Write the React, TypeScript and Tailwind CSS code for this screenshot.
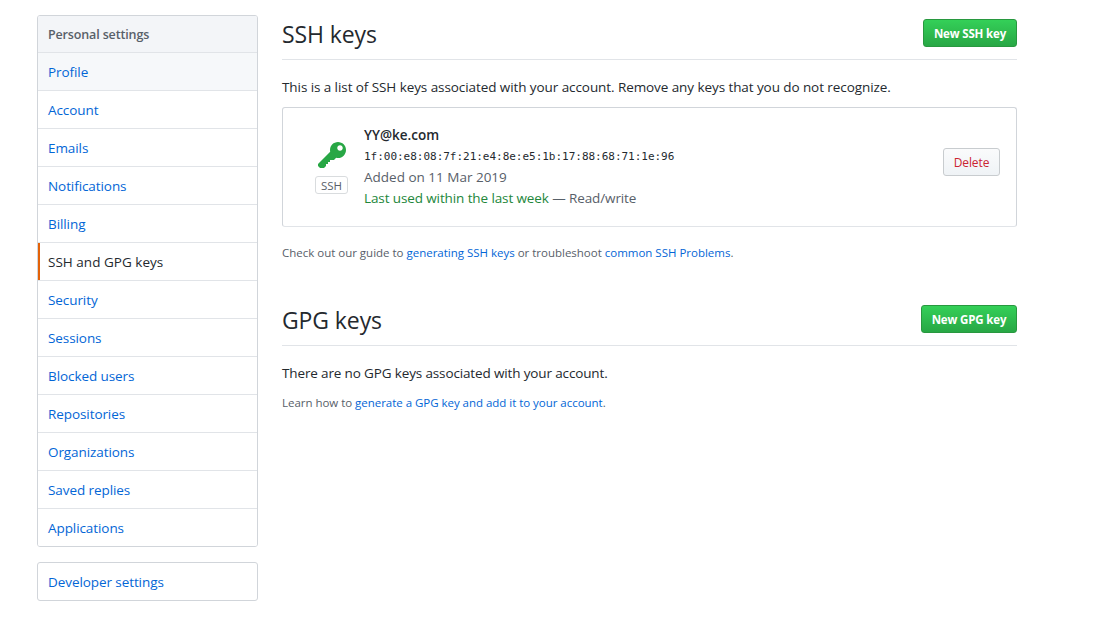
import type { ReactNode } from "react";

const items = [
  "Profile",
  "Account",
  "Emails",
  "Notifications",
  "Billing",
  "SSH and GPG keys",
  "Security",
  "Sessions",
  "Blocked users",
  "Repositories",
  "Organizations",
  "Saved replies",
  "Applications",
];

function Link({ children }: { children: ReactNode }) {
  return (
    <a href="#" className="text-[#0366d6]">
      {children}
    </a>
  );
}

function SidebarItem({ label }: { label: string }) {
  const base = "block h-[38px] border-t border-[#e1e4e8] pt-[9px] pl-[10px] leading-[21px]";
  if (label === "SSH and GPG keys") {
    return (
      <a href="#" className={`${base} relative font-medium tracking-[0.02px] text-[#24292e]`}>
        <span className="absolute top-0 left-0 h-[37px] w-[2px] bg-[#e36209]" />
        {label}
      </a>
    );
  }
  return (
    <a href="#" className={`${base} text-[#0366d6] ${label === "Profile" ? "bg-[#f6f8fa]" : "bg-white"}`}>
      {label}
    </a>
  );
}

function Subhead({ title, action, width }: { title: string; action: string; width: string }) {
  return (
    <div className="flex h-[41px] items-start justify-between border-b border-[#e1e4e8]">
      <h2 className="text-[23px] leading-[30px] font-normal tracking-[-0.1px]">{title}</h2>
      <button
        className={`h-[28px] rounded-[3px] border border-[#28983f] bg-linear-to-b from-[#34d058] to-[#28a745] pt-[2px] text-[11.5px] leading-[24px] font-bold tracking-[-0.15px] whitespace-nowrap text-white ${width}`}
      >
        {action}
      </button>
    </div>
  );
}

function KeyIcon() {
  return (
    <svg width="28" height="32" viewBox="0 0 14 16" fill="#28a745" aria-hidden="true">
      <path
        fillRule="evenodd"
        d="M12.83 2.17C12.08 1.42 11.14 1.03 10 1c-1.13.03-2.08.42-2.83 1.17S6.04 3.86 6.01 5c0 .3.03.59.09.89L0 12v1l1 1h2l1-1v-1h1v-1h1v-1h2l1.09-1.11c.3.08.59.11.91.11 1.14-.03 2.08-.42 2.83-1.17S13.97 6.14 14 5c-.03-1.14-.42-2.08-1.17-2.83zM11 5.38c-.77 0-1.38-.61-1.38-1.38 0-.77.61-1.38 1.38-1.38.77 0 1.38.61 1.38 1.38 0 .77-.61 1.38-1.38 1.38z"
      />
    </svg>
  );
}

export default function App() {
  return (
    <div className="flex h-[635px] gap-[24px] overflow-hidden bg-white pt-[15px] pl-[37px] font-['Open_Sans','Noto_Sans',sans-serif] text-[13.5px] leading-[21px] tracking-[-0.08px] text-[#24292e]">
      <aside className="w-[221px] shrink-0">
        <nav className="h-[532px] overflow-hidden rounded-[3px] border border-[#d1d5da]">
          <div className="h-[36px] bg-[#f3f5f8] pt-[8px] pl-[10px] text-[12.5px] leading-[21px] font-semibold tracking-[-0.14px] text-[#586069]">
            Personal settings
          </div>
          {items.map((label) => (
            <SidebarItem key={label} label={label} />
          ))}
        </nav>
        <nav className="mt-[15px] h-[39px] rounded-[3px] border border-[#d1d5da] pt-[9px] pl-[10px]">
          <Link>Developer settings</Link>
        </nav>
      </aside>
      <main className="w-[735px] shrink-0 pt-[4px]">
        <Subhead title="SSH keys" action="New SSH key" width="w-[94px]" />
        <p className="mt-[17px] whitespace-nowrap">
          This is a list of SSH keys associated with your account. Remove any keys that you do not recognize.
        </p>
        <div className="mt-[9px] flex h-[120px] rounded-[3px] border border-t-[#d1d5da] border-r-[#d1d5da] border-b-[#e1e4e8] border-l-[#d1d5da] pl-[32px]">
          <div className="flex w-[33px] flex-col items-center pt-[32px]">
            <KeyIcon />
            <span className="mt-[4px] h-[18px] w-[33px] rounded-[3px] border border-[#d9dcde] text-center text-[11.5px] leading-[17px] text-[#586069]">
              SSH
            </span>
          </div>
          <div className="ml-[16px] flex-1 pt-[17px] whitespace-nowrap text-[#586069]">
            <div className="font-semibold tracking-normal text-[#24292e]">YY@ke.com</div>
            <div className="font-['DejaVu_Sans_Mono',monospace] text-[11px] leading-[22px] tracking-[-0.02px] text-[#24292e]">
              1f:00:e8:08:7f:21:e4:8e:e5:1b:17:88:68:71:1e:96
            </div>
            <div className="-mt-px leading-[20px] tracking-normal">Added on 11 Mar 2019</div>
            <div className="leading-[22px] tracking-[-0.11px]">
              <span className="text-[#22863a]">Last used within the last week</span> — Read/write
            </div>
          </div>
          <button className="mt-[40px] mr-[16px] h-[28px] w-[57px] rounded-[3px] border border-[#c8cccf] bg-linear-to-b from-[#fafbfc] to-[#eff3f6] pt-[2px] text-[12px] leading-[24px] font-medium text-[#cb2431]">
            Delete
          </button>
        </div>
        <p className="mt-[15px] text-[11.5px] leading-[21px] tracking-[-0.01px] whitespace-nowrap text-[#586069]">
          Check out our guide to <Link>generating SSH keys</Link> or troubleshoot <Link>common SSH Problems</Link>.
        </p>
        <div className="mt-[42px]">
          <Subhead title="GPG keys" action="New GPG key" width="w-[96px]" />
        </div>
        <p className="mt-[17px] tracking-[-0.14px] whitespace-nowrap">
          There are no GPG keys associated with your account.
        </p>
        <p className="mt-[9px] text-[11.5px] leading-[19px] tracking-[-0.03px] whitespace-nowrap text-[#586069]">
          Learn how to <Link>generate a GPG key and add it to your account</Link>.
        </p>
      </main>
    </div>
  );
}
